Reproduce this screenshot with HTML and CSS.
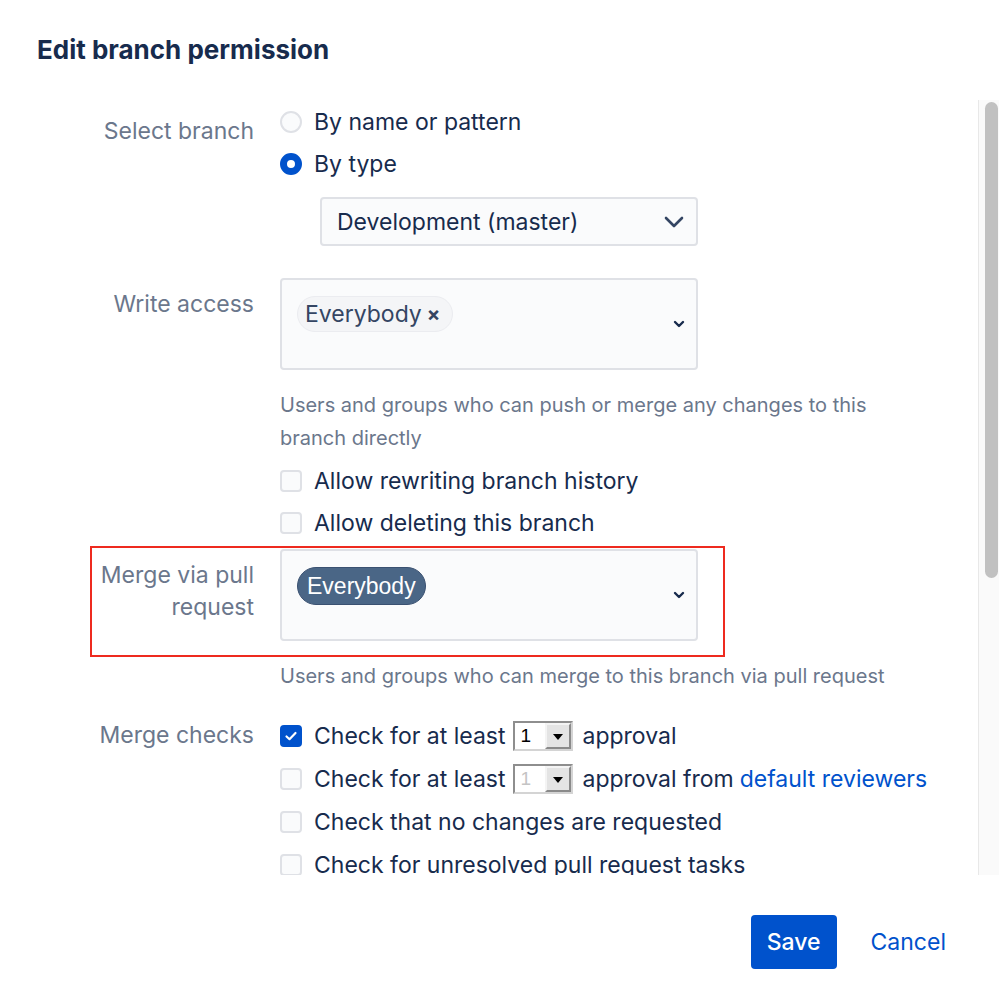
FILE: index.html
```html
<!DOCTYPE html>
<html lang="en">
<head>
    <meta charset="UTF-8">
    <title>Edit branch permission</title>
    <link rel="stylesheet" href="styles.css">
</head>
<body>
    <div class="dialog">
        <h1 class="dialog-title">Edit branch permission</h1>

        <div class="dialog-body">
            <div class="scroll-area">
                <form class="form">
                    <div class="row">
                        <label class="label label-branch">Select branch</label>
                        <div class="field">
                            <div class="option"><span class="radio"></span>By name or pattern</div>
                            <div class="option"><span class="radio checked"></span>By type</div>
                            <div class="select">
                                <span>Development (master)</span>
                                <svg class="chevron" width="20" height="12" viewBox="0 0 20 12"><path d="M2 2 L10 10 L18 2" fill="none" stroke="#344563" stroke-width="2.6" stroke-linecap="round" stroke-linejoin="round"/></svg>
                            </div>
                        </div>
                    </div>

                    <div class="row row-write">
                        <label class="label">Write access</label>
                        <div class="field">
                            <div class="multi">
                                <span class="chip">Everybody <span class="chip-x">&times;</span></span>
                                <svg class="chevron-sm" width="12" height="8" viewBox="0 0 12 8"><path d="M2 2 L6 6 L10 2" fill="none" stroke="#172b4d" stroke-width="2.4" stroke-linecap="round" stroke-linejoin="round"/></svg>
                            </div>
                            <p class="help">Users and groups who can push or merge any changes to this branch directly</p>
                            <div class="option"><span class="checkbox"></span>Allow rewriting branch history</div>
                            <div class="option"><span class="checkbox"></span>Allow deleting this branch</div>
                        </div>
                    </div>

                    <div class="row row-merge highlighted">
                        <label class="label">Merge via pull request</label>
                        <div class="field">
                            <div class="multi">
                                <span class="chip chip-dark">Everybody</span>
                                <svg class="chevron-sm" width="12" height="8" viewBox="0 0 12 8"><path d="M2 2 L6 6 L10 2" fill="none" stroke="#172b4d" stroke-width="2.4" stroke-linecap="round" stroke-linejoin="round"/></svg>
                            </div>
                            <p class="help">Users and groups who can merge to this branch via pull request</p>
                        </div>
                    </div>

                    <div class="row row-checks">
                        <label class="label label-checks">Merge checks</label>
                        <div class="field">
                            <div class="option merge-line">
                                <span class="checkbox checked">
                                    <svg width="14" height="12" viewBox="0 0 14 12"><path d="M2.5 6.5 L5.5 9.2 L11.5 3" fill="none" stroke="#fff" stroke-width="2.2" stroke-linecap="round" stroke-linejoin="round"/></svg>
                                </span>
                                Check for at least
                                <span class="native-select"><span class="ns-value">1</span><span class="ns-arrow"></span></span>
                                approval
                            </div>
                            <div class="option merge-line">
                                <span class="checkbox"></span>
                                Check for at least
                                <span class="native-select disabled"><span class="ns-value">1</span><span class="ns-arrow"></span></span>
                                approval from <a href="#" class="link">default reviewers</a>
                            </div>
                            <div class="option merge-line"><span class="checkbox"></span>Check that no changes are requested</div>
                            <div class="option merge-line"><span class="checkbox"></span>Check for unresolved pull request tasks</div>
                        </div>
                    </div>
                </form>
            </div>
            <div class="scrollbar"><div class="thumb"></div></div>
        </div>

        <div class="dialog-footer">
            <button class="btn-save">Save</button>
            <button class="btn-cancel">Cancel</button>
        </div>
    </div>
</body>
</html>
```

FILE: styles.css
```css
* {
    margin: 0;
    padding: 0;
    box-sizing: border-box;
}

body {
    font-family: 'Inter', 'Liberation Sans', sans-serif;
    font-size: 23px;
    color: #172b4d;
    background-color: #fff;
    width: 999px;
    height: 999px;
    overflow: hidden;
}

.dialog-title {
    font-size: 26px;
    font-weight: 700;
    line-height: 32px;
    color: #172b4d;
    padding: 34px 37px 0;
    margin-bottom: 34px;
}

.dialog-body {
    position: relative;
    height: 775px;
}

.scroll-area {
    height: 100%;
    overflow: hidden;
}

.scrollbar {
    position: absolute;
    top: 0;
    right: 0;
    width: 21px;
    height: 100%;
    background-color: #fafafa;
    border-left: 1px solid #e8e8e8;
}

.thumb {
    margin: 2px 0 0 6px;
    width: 13px;
    height: 476px;
    border-radius: 7px;
    background-color: #c1c1c1;
}

/* form layout */
.form {
    padding-top: 1px;
}

.row {
    display: grid;
    grid-template-columns: 254px 660px;
    column-gap: 26px;
}

.label {
    color: #6b778c;
    text-align: right;
    line-height: 32px;
    padding: 10px 0 0 88px;
}

.label-branch {
    padding-top: 14px;
}

.label-checks {
    padding-top: 5px;
}

.row-write {
    margin-top: 32px;
}

.row-merge {
    margin-top: 5px;
    position: relative;
}

.highlighted::after {
    content: "";
    position: absolute;
    top: -3px;
    left: 90px;
    width: 631px;
    height: 107px;
    border: 2px solid #ee2a1f;
}

.row-checks {
    margin-top: 21px;
}

.option {
    display: flex;
    align-items: center;
    height: 42px;
    white-space: nowrap;
}

.merge-line {
    height: 43px;
}

.radio {
    width: 22px;
    height: 22px;
    border-radius: 50%;
    border: 2px solid #dfe1e6;
    background-color: #fafbfc;
    margin-right: 12px;
    flex-shrink: 0;
}

.radio.checked {
    border: 7px solid #0052cc;
    background-color: #fff;
}

.checkbox {
    width: 22px;
    height: 22px;
    border-radius: 4px;
    border: 2px solid #dfe1e6;
    background-color: #fafbfc;
    margin-right: 12px;
    flex-shrink: 0;
    display: flex;
    align-items: center;
    justify-content: center;
}

.checkbox.checked {
    border-color: #0052cc;
    background-color: #0052cc;
}

.select {
    margin: 12px 0 0 40px;
    width: 378px;
    height: 49px;
    border: 2px solid #dfe1e6;
    border-radius: 4px;
    background-color: #fafbfc;
    display: flex;
    align-items: center;
    justify-content: space-between;
    padding: 0 12px 0 15px;
}

.chevron {
    margin-top: 1px;
}

.multi {
    position: relative;
    width: 418px;
    height: 92px;
    border: 2px solid #dfe1e6;
    border-radius: 4px;
    background-color: #fafbfc;
    padding: 16px 15px;
}

.chevron-sm {
    position: absolute;
    right: 11px;
    top: 40px;
}

.chip {
    display: inline-flex;
    align-items: center;
    height: 36px;
    padding: 0 12px 0 7px;
    border-radius: 18px;
    background-color: #f4f5f7;
    border: 1px solid #ebecf0;
    color: #344563;
}

.chip-x {
    font-weight: 700;
    margin-left: 5px;
    font-size: 20px;
}

.chip-dark {
    height: 38px;
    padding: 0 9px;
    border-radius: 19px;
    background-color: #4a6686;
    border: 1px solid #3a5171;
    color: #fff;
    font-family: 'Liberation Sans', sans-serif;
    font-size: 23px;
}

.help {
    color: #6b778c;
    font-size: 20px;
    line-height: 33px;
    margin-top: 19px;
    max-width: 620px;
}

.row-write .help {
    margin-bottom: 5px;
}

/* old style native select */
.native-select {
    display: inline-flex;
    flex-shrink: 0;
    width: 60px;
    height: 30px;
    margin: 0 10px 0 7px;
    border: 2px solid;
    border-color: #8e8e8e #d4d4d4 #d4d4d4 #8e8e8e;
    background-color: #fff;
    font-family: 'Liberation Sans', sans-serif;
    font-size: 19px;
}

.ns-value {
    flex: 1;
    padding-left: 6px;
    line-height: 26px;
    color: #000;
}

.disabled .ns-value {
    color: #c4c4c4;
}

.ns-arrow {
    width: 26px;
    border: 2px solid;
    border-color: #f4f4f4 #8a8a8a #8a8a8a #f4f4f4;
    background-color: #e4e4e4;
    position: relative;
}

.ns-arrow::after {
    content: "";
    position: absolute;
    left: 6px;
    top: 9px;
    border-left: 5px solid transparent;
    border-right: 5px solid transparent;
    border-top: 6px solid #000;
}

.link {
    color: #0052cc;
    text-decoration: none;
    margin-left: 6px;
}

/* footer */
.dialog-footer {
    display: flex;
    justify-content: flex-end;
    align-items: center;
    padding: 40px 53px 0 0;
}

.btn-save {
    font-family: inherit;
    font-size: 23px;
    font-weight: 500;
    color: #fff;
    background-color: #0052cc;
    border: none;
    border-radius: 4px;
    width: 86px;
    height: 54px;
    cursor: pointer;
}

.btn-cancel {
    font-family: inherit;
    font-size: 23px;
    color: #0052cc;
    background: none;
    border: none;
    margin-left: 34px;
    cursor: pointer;
}
```
